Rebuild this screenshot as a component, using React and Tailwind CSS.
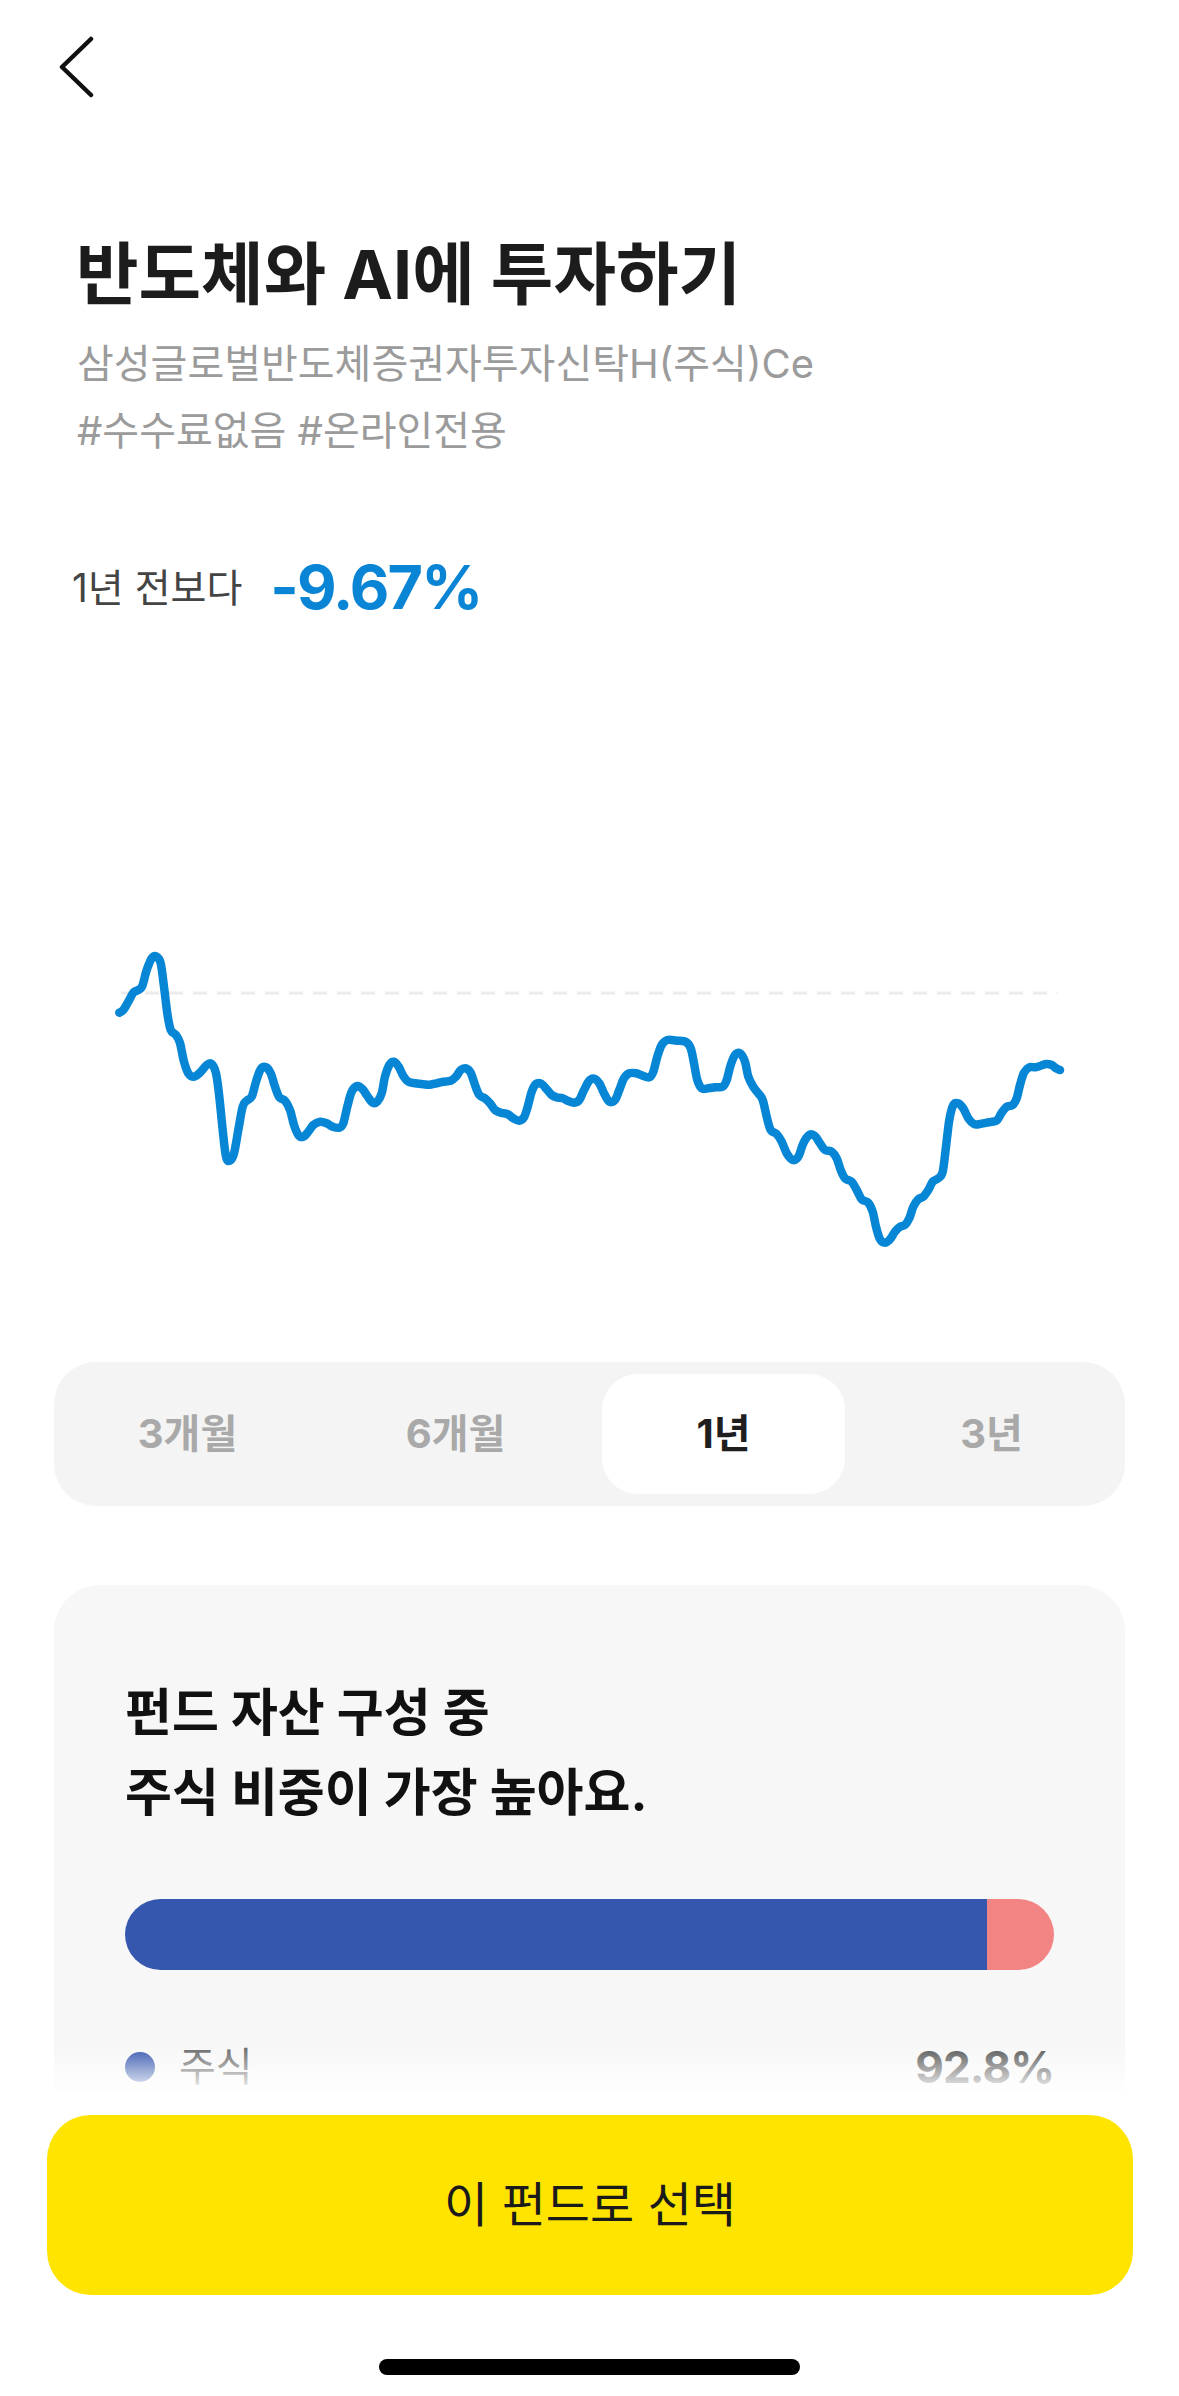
import React from "react";

const PTS = [
[119.3,1012.7],[123.3,1010],[128.3,1001.7],[133.3,992.7],[138.3,990],[142.3,986],[146.7,970],[151.7,958.3],[156.7,956.7],[160.7,963.3],[164,986.7],[167.3,1013.3],[170.7,1030],[176,1035],[180,1043],[184,1061.7],[188.3,1073.3],[194,1076.7],[200,1072.7],[206.7,1065],[211.7,1064],[216,1073.3],[219.3,1096.7],[222.7,1130],[226,1156.7],[230,1160.7],[234,1153.3],[238.3,1130],[242.7,1106.7],[246.7,1100.7],[251.7,1096.7],[256,1081.7],[260.7,1069.3],[266,1067.3],[270.7,1073.3],[275,1086.7],[279.3,1097.3],[285,1100.7],[290,1110],[294,1125],[298.3,1135],[303.3,1136.7],[308.3,1131.7],[313.3,1125],[320,1121.7],[326.7,1123.3],[332.7,1126.7],[339.3,1127.7],[343.3,1123.3],[347.3,1106.7],[351.7,1091.7],[357.3,1086],[362.7,1089.3],[367.3,1096],[372.7,1102.7],[377.3,1101.7],[381.7,1093.3],[385,1076.7],[389.3,1065],[394,1061.7],[398.7,1066.7],[403.3,1076],[408.3,1081.7],[415,1083.3],[423.3,1084.3],[430,1084.7],
[436.7,1083.3],[443.3,1081.7],[450.7,1080.7],[456,1076.7],[460.7,1070],[466,1068.3],[470.7,1072.7],[475,1085],[479.3,1095],[485,1098.3],[490,1103.3],[495,1110],[500.7,1112.7],[507.3,1114],[513.3,1118.3],[519.3,1120.7],[524,1117.3],[527.7,1106.7],[531.7,1091.7],[536,1084],[541.7,1084],[546.7,1089.3],[551.7,1095],[556.7,1097.3],[562.7,1098.3],[568.3,1101],[574,1102.7],[579.3,1100],[584,1090],[589.3,1080.7],[594,1078.7],[599.3,1083.3],[604,1093.3],[609.3,1101.7],[615,1100],[619.3,1090],[624,1078.3],[629.3,1073.3],[636,1073.3],[642.7,1075.7],[649.3,1077.3],[653.3,1071.7],[657.3,1056.7],[661.7,1045],[667.3,1040],[676.7,1040.7],[686,1042],[690.7,1048.3],[694,1063.3],[697.3,1080],[701.7,1088.3],[708.3,1088.3],[715,1087.3],[722.7,1086.7],[726.7,1080],[730.7,1065],[735,1055],[740,1053.3],[745,1061.7],[748.3,1076.7],
[753.3,1086.7],[758.3,1093.3],[762.7,1100],[766.7,1116.7],[770.7,1130],[776.7,1134],[781.7,1141.7],[786.7,1153.3],[792.7,1160],[798.3,1156.7],[803.3,1143.3],[809.3,1135],[815,1136],[820,1143.3],[825,1150],[831.7,1151.7],[836.7,1158.3],[840.7,1170],[845,1178.3],[851.7,1181.7],[856.7,1190],[861.7,1199.3],[868.3,1202.7],[872.7,1211.7],[876,1226.7],[880,1239.3],[885,1242.7],[890,1239.3],[895,1231.7],[900,1226.7],[905,1225],[909.3,1218.3],[913.3,1206.7],[918.3,1199.3],[923.3,1196.7],[928.3,1190],[932.7,1181.7],[938.3,1178.3],[942.7,1171.7],[946,1146.7],[949.3,1120],[953.3,1105],[958.3,1103.3],[963.3,1108.3],[968.3,1118.3],[974,1124],[980,1124],[986.7,1122.7],[992.7,1121.7],[997.3,1120],[1001.7,1112.7],[1006.7,1106.7],[1012.7,1105],[1016.7,1098.3],[1020,1085],[1024,1072.7],[1029.3,1067.3],[1035,1067.3],[1040,1066],[1046,1064],[1051.7,1065],[1056,1068.3],[1060,1070]
];

function smoothPath(p) {
  let d = `M${p[0][0]} ${p[0][1]}`;
  for (let i = 0; i < p.length - 1; i++) {
    const p0 = p[i - 1] || p[i];
    const p1 = p[i];
    const p2 = p[i + 1];
    const p3 = p[i + 2] || p2;
    const t = 6;
    const c1x = p1[0] + (p2[0] - p0[0]) / t;
    const c1y = p1[1] + (p2[1] - p0[1]) / t;
    const c2x = p2[0] - (p3[0] - p1[0]) / t;
    const c2y = p2[1] - (p3[1] - p1[1]) / t;
    d += ` C${c1x.toFixed(1)} ${c1y.toFixed(1)} ${c2x.toFixed(1)} ${c2y.toFixed(1)} ${p2[0]} ${p2[1]}`;
  }
  return d;
}

const LINE = smoothPath(PTS);

function Tab({ label, active }) {
  return (
    <div
      className={
        active
          ? "flex h-[120px] items-center justify-center rounded-[36px] bg-white text-[40px] font-bold text-[#1e1e1e]"
          : "flex h-[120px] items-center justify-center text-[40px] font-bold text-[#a9a9a9]"
      }
    >
      {label}
    </div>
  );
}

export default function App() {
  return (
    <div className="relative h-[2396px] w-[1179px] overflow-hidden bg-white font-['Inter','Noto_Sans_CJK_KR',sans-serif]">
      {/* header */}
      <div className="h-[234px] pl-[58px] pt-[36px]">
        <svg width="40" height="64" viewBox="0 0 40 64" fill="none">
          <path d="M33 3 L4 31 L33 59" stroke="#111" strokeWidth="4.5" strokeLinecap="round" strokeLinejoin="round" />
        </svg>
      </div>

      <h1 className="pl-[76px] text-[68px] font-bold leading-[80px] text-[#1c1c1c]">
        반도체와 AI에 투자하기
      </h1>
      <p className="mt-[16px] pl-[77px] text-[40px] leading-[67px] text-[#9b9b9b]">
        삼성글로벌반도체증권자투자신탁H(주식)Ce
      </p>
      <p className="pl-[77px] text-[40px] leading-[67px] text-[#9b9b9b]">
        #수수료없음 #온라인전용
      </p>

      <div className="mt-[89px] flex h-[70px] items-center gap-[28px] pl-[72px]">
        <span className="text-[39px] text-[#444]">1년 전보다</span>
        <span className="text-[61px] font-bold tracking-[-0.03em] text-[#0a84d4]">-9.67%</span>
      </div>

      {/* chart */}
      <svg className="block" width="1179" height="739" viewBox="0 623 1179 739" fill="none">
        <line x1="121" y1="993" x2="1058" y2="993" stroke="#ebebeb" strokeWidth="3" strokeDasharray="14 10" />
        <path d={LINE} stroke="#0786d5" strokeWidth="8.5" strokeLinecap="round" strokeLinejoin="round" fill="none" />
      </svg>

      {/* period tabs */}
      <div className="mx-[54px] grid grid-cols-4 gap-[25px] rounded-[42px] bg-[#f4f4f4] px-[12px] py-[12px]">
        <Tab label="3개월" />
        <Tab label="6개월" />
        <Tab label="1년" active />
        <Tab label="3년" />
      </div>

      {/* asset card */}
      <div className="mx-[54px] mt-[79px] rounded-[46px] bg-[#f7f7f7] px-[71px] pb-[240px] pt-[88px]">
        <p className="text-[51px] font-bold leading-[80px] text-[#111]">
          펀드 자산 구성 중
          <br />
          주식 비중이 가장 높아요.
        </p>
        <div className="mt-[66px] flex h-[71px] overflow-hidden rounded-full">
          <div className="h-full bg-[#3557ad]" style={{ width: "92.8%" }} />
          <div className="h-full flex-1 bg-[#f28583]" />
        </div>
        <div className="mt-[72px] flex h-[50px] items-center justify-between">
          <div className="flex items-center gap-[24px]">
            <span className="h-[30px] w-[30px] rounded-full bg-[#3557ad]" />
            <span className="text-[40px] text-[#666]">주식</span>
          </div>
          <span className="text-[44px] font-bold tracking-[-0.02em] text-[#555]">92.8%</span>
        </div>
        <div className="mt-[40px] flex h-[50px] items-center justify-between">
          <div className="flex items-center gap-[24px]">
            <span className="h-[30px] w-[30px] rounded-full bg-[#f28583]" />
            <span className="text-[40px] text-[#666]">기타</span>
          </div>
          <span className="text-[44px] font-bold tracking-[-0.02em] text-[#555]">7.2%</span>
        </div>
      </div>

      {/* bottom fixed area */}
      <div className="absolute inset-x-0 bottom-0">
        <div className="h-[50px] bg-gradient-to-b from-white/0 to-white" />
        <div className="bg-white pt-[20px] pb-[21px]">
          <button className="mx-[47px] flex h-[180px] w-[1086px] items-center justify-center rounded-[44px] bg-[#ffe400] text-[48px] text-[#1a1a1a]">
            이 펀드로 선택
          </button>
          <div className="mt-[64px] flex justify-center">
            <div className="h-[16px] w-[421px] rounded-full bg-black" />
          </div>
        </div>
      </div>
    </div>
  );
}
